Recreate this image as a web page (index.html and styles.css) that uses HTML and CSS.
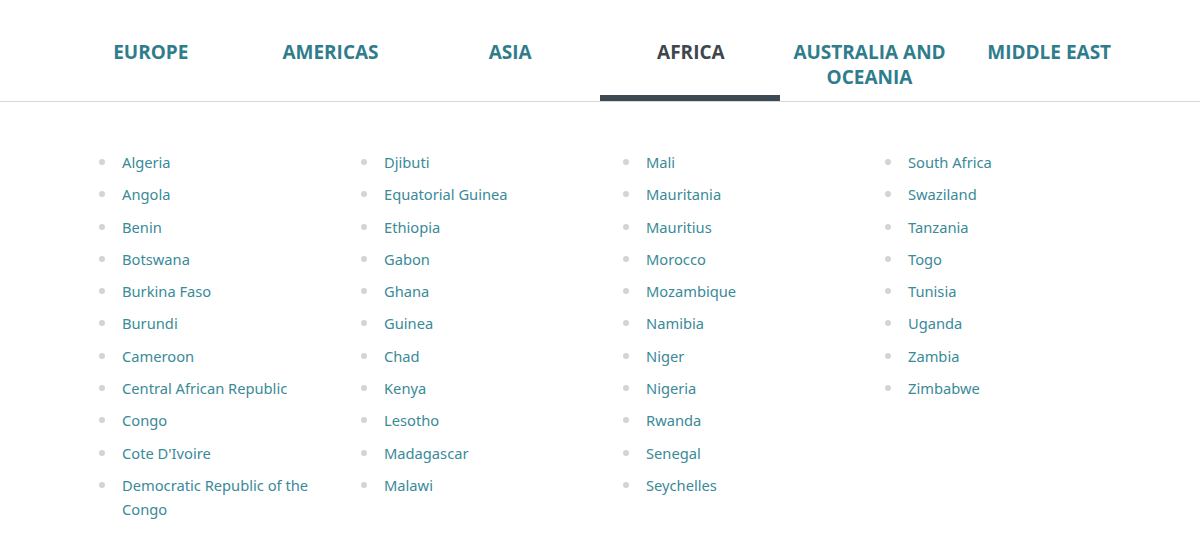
FILE: index.html
```html
<!DOCTYPE html>
<html lang="en">
<head>
<meta charset="utf-8">
<title>Regions</title>
<link rel="stylesheet" href="styles.css">
</head>
<body>
<nav class="tabs-bar">
  <ul class="tabs">
    <li class="tab"><span>EUROPE</span></li>
    <li class="tab"><span>AMERICAS</span></li>
    <li class="tab"><span>ASIA</span></li>
    <li class="tab active"><span>AFRICA</span></li>
    <li class="tab"><span>AUSTRALIA AND<br>OCEANIA</span></li>
    <li class="tab"><span>MIDDLE EAST</span></li>
  </ul>
</nav>
<main class="countries">
  <ul class="col">
    <li>Algeria</li><li>Angola</li><li>Benin</li><li>Botswana</li><li>Burkina Faso</li><li>Burundi</li><li>Cameroon</li><li>Central African Republic</li><li>Congo</li><li>Cote D'Ivoire</li><li>Democratic Republic of the Congo</li>
  </ul>
  <ul class="col">
    <li>Djibuti</li><li>Equatorial Guinea</li><li>Ethiopia</li><li>Gabon</li><li>Ghana</li><li>Guinea</li><li>Chad</li><li>Kenya</li><li>Lesotho</li><li>Madagascar</li><li>Malawi</li>
  </ul>
  <ul class="col">
    <li>Mali</li><li>Mauritania</li><li>Mauritius</li><li>Morocco</li><li>Mozambique</li><li>Namibia</li><li>Niger</li><li>Nigeria</li><li>Rwanda</li><li>Senegal</li><li>Seychelles</li>
  </ul>
  <ul class="col">
    <li>South Africa</li><li>Swaziland</li><li>Tanzania</li><li>Togo</li><li>Tunisia</li><li>Uganda</li><li>Zambia</li><li>Zimbabwe</li>
  </ul>
</main>
</body>
</html>
```
FILE: styles.css
```css
html, body {
  margin: 0;
  padding: 0;
  background: #fff;
}
body {
  font-family: "Open Sans", "Noto Sans", sans-serif;
}
.tabs-bar {
  border-bottom: 1px solid #d4d8da;
}
.tabs {
  list-style: none;
  margin: 0 auto;
  padding: 0;
  width: 1078px;
  display: flex;
}
.tab {
  flex: 1 1 0;
  display: flex;
  justify-content: center;
  align-items: flex-start;
  padding-top: 40px;
  height: 55px;
  border-bottom: 6px solid transparent;
  text-align: center;
  font-size: 19px;
  font-weight: 700;
  line-height: 25px;
  color: #2f7d8c;
}
.tab.active {
  color: #3d474d;
  border-bottom-color: #3e4a51;
}
.tab.active span {
  position: relative;
  left: 1px;
}
.countries {
  display: grid;
  grid-template-columns: repeat(4, 262px);
  width: 1048px;
  margin: 48px auto 0 90px;
}
.col {
  list-style: none;
  margin: 0;
  padding: 0;
  display: flex;
  flex-direction: column;
  gap: 7.8px;
}
.col li {
  position: relative;
  padding-left: 32px;
  padding-right: 36px;
  font-family: "Noto Sans", "Open Sans", sans-serif;
  font-size: 14.7px;
  line-height: 24.5px;
  color: #3a8a98;
}
.col li::before {
  content: "";
  position: absolute;
  left: 9px;
  top: 9px;
  width: 6px;
  height: 6px;
  border-radius: 50%;
  background: #d2d4d6;
}
```
